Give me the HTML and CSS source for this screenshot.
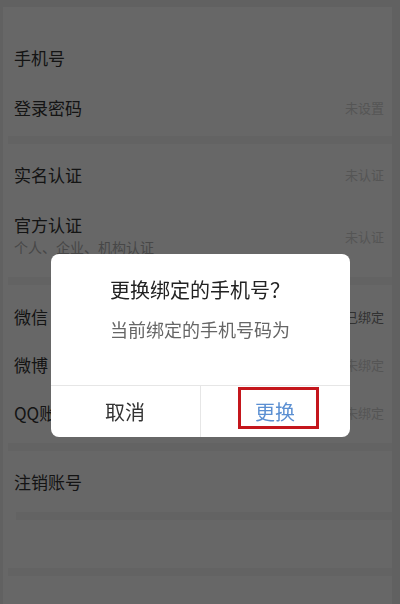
FILE: index.html
```html
<!DOCTYPE html>
<html lang="zh-CN">
<head>
<meta charset="utf-8">
<title>账号与安全</title>
<link rel="stylesheet" href="styles.css">
</head>
<body>
<div class="frame">
  <section class="group g1">
    <div class="row"><span class="label">手机号</span></div>
    <div class="row"><span class="label">登录密码</span><span class="value">未设置</span></div>
  </section>
  <div class="band"></div>
  <section class="group g2">
    <div class="row"><span class="label">实名认证</span><span class="value">未认证</span></div>
    <div class="row tall">
      <div class="stack"><span class="label">官方认证</span><span class="sub">个人、企业、机构认证</span></div>
      <span class="value">未认证</span>
    </div>
  </section>
  <div class="band"></div>
  <section class="group g3">
    <div class="row mid"><span class="label">微信</span><span class="value dark">已绑定</span></div>
    <div class="row mid"><span class="label">微博</span><span class="value">未绑定</span></div>
    <div class="row mid"><span class="label">QQ账号</span><span class="value">未绑定</span></div>
  </section>
  <div class="band"></div>
  <section class="group g4">
    <div class="row"><span class="label">注销账号</span></div>
  </section>
  <div class="band inset"></div>
  <div class="empty"></div>
  <div class="band"></div>
</div>

<div class="mask">
  <div class="dialog">
    <div class="dialog-body">
      <div class="dialog-title">更换绑定的手机号？</div>
      <div class="dialog-text">当前绑定的手机号码为</div>
    </div>
    <div class="dialog-actions">
      <div class="btn cancel">取消</div>
      <div class="btn confirm">更换<span class="mark"></span></div>
    </div>
  </div>
</div>
</body>
</html>
```

FILE: styles.css
```css
html, body {
  margin: 0;
  padding: 0;
}

body {
  width: 400px;
  height: 604px;
  overflow: hidden;
  background: #efefef;
  font-family: "Noto Sans CJK SC", "Noto Sans", sans-serif;
  color: #333;
}

.frame {
  margin: 7px 8px 0 3px;
  height: 597px;
  background: #ffffff;
  display: flex;
  flex-direction: column;
}

.group {
  display: flex;
  flex-direction: column;
}

.g1 { padding: 26px 0 3px; }
.g2 { padding: 6px 0 0; }
.g3 { padding: 8px 0 6px; }
.g4 { padding: 6px 0 5px; }

.band {
  height: 8px;
  margin-left: 5px;
  background: #f6f6f6;
}

.band.inset {
  margin-left: 13px;
}

.empty {
  height: 48px;
}

.row {
  height: 50px;
  display: flex;
  align-items: center;
  justify-content: space-between;
  padding: 0 8px 0 11px;
}

.row.mid {
  height: 48px;
}

.row.tall {
  height: 77px;
  align-items: flex-start;
}

.row.tall .value {
  align-self: center;
  margin-bottom: 4px;
}

.stack {
  display: flex;
  flex-direction: column;
  padding-top: 14px;
}

.label {
  font-size: 17px;
  line-height: 22px;
  color: #333;
}

.sub {
  font-size: 14px;
  line-height: 22px;
  color: #b0b0b0;
}

.value {
  font-size: 13px;
  line-height: 20px;
  color: #d2d2d2;
}

.value.dark {
  color: #7a7a7a;
}

.mask {
  position: fixed;
  inset: 0;
  background: rgba(0, 0, 0, 0.595);
  display: flex;
  justify-content: center;
  align-items: flex-start;
  padding-top: 254px;
  box-sizing: border-box;
}

.dialog {
  width: 299px;
  height: 183px;
  background: #ffffff;
  border-radius: 8px;
  display: flex;
  flex-direction: column;
  overflow: hidden;
}

.dialog-body {
  height: 132px;
  box-sizing: border-box;
  padding-top: 24px;
  display: flex;
  flex-direction: column;
  align-items: center;
  gap: 15px;
  border-bottom: 1px solid #e6e6e6;
}

.dialog-title {
  font-size: 20px;
  line-height: 24px;
  color: #222;
}

.dialog-text {
  font-size: 18px;
  line-height: 24px;
  color: #666;
}

.dialog-actions {
  flex: 1;
  display: flex;
}

.btn {
  flex: 1;
  display: flex;
  align-items: center;
  justify-content: center;
  font-size: 20px;
  line-height: 24px;
  position: relative;
}

.cancel {
  color: #333;
  border-right: 1px solid #e6e6e6;
}

.confirm {
  color: #5b8fd2;
}

.mark {
  position: absolute;
  left: 37px;
  top: 1px;
  width: 81px;
  height: 42px;
  box-sizing: border-box;
  border: 3px solid #c4161c;
}
```
